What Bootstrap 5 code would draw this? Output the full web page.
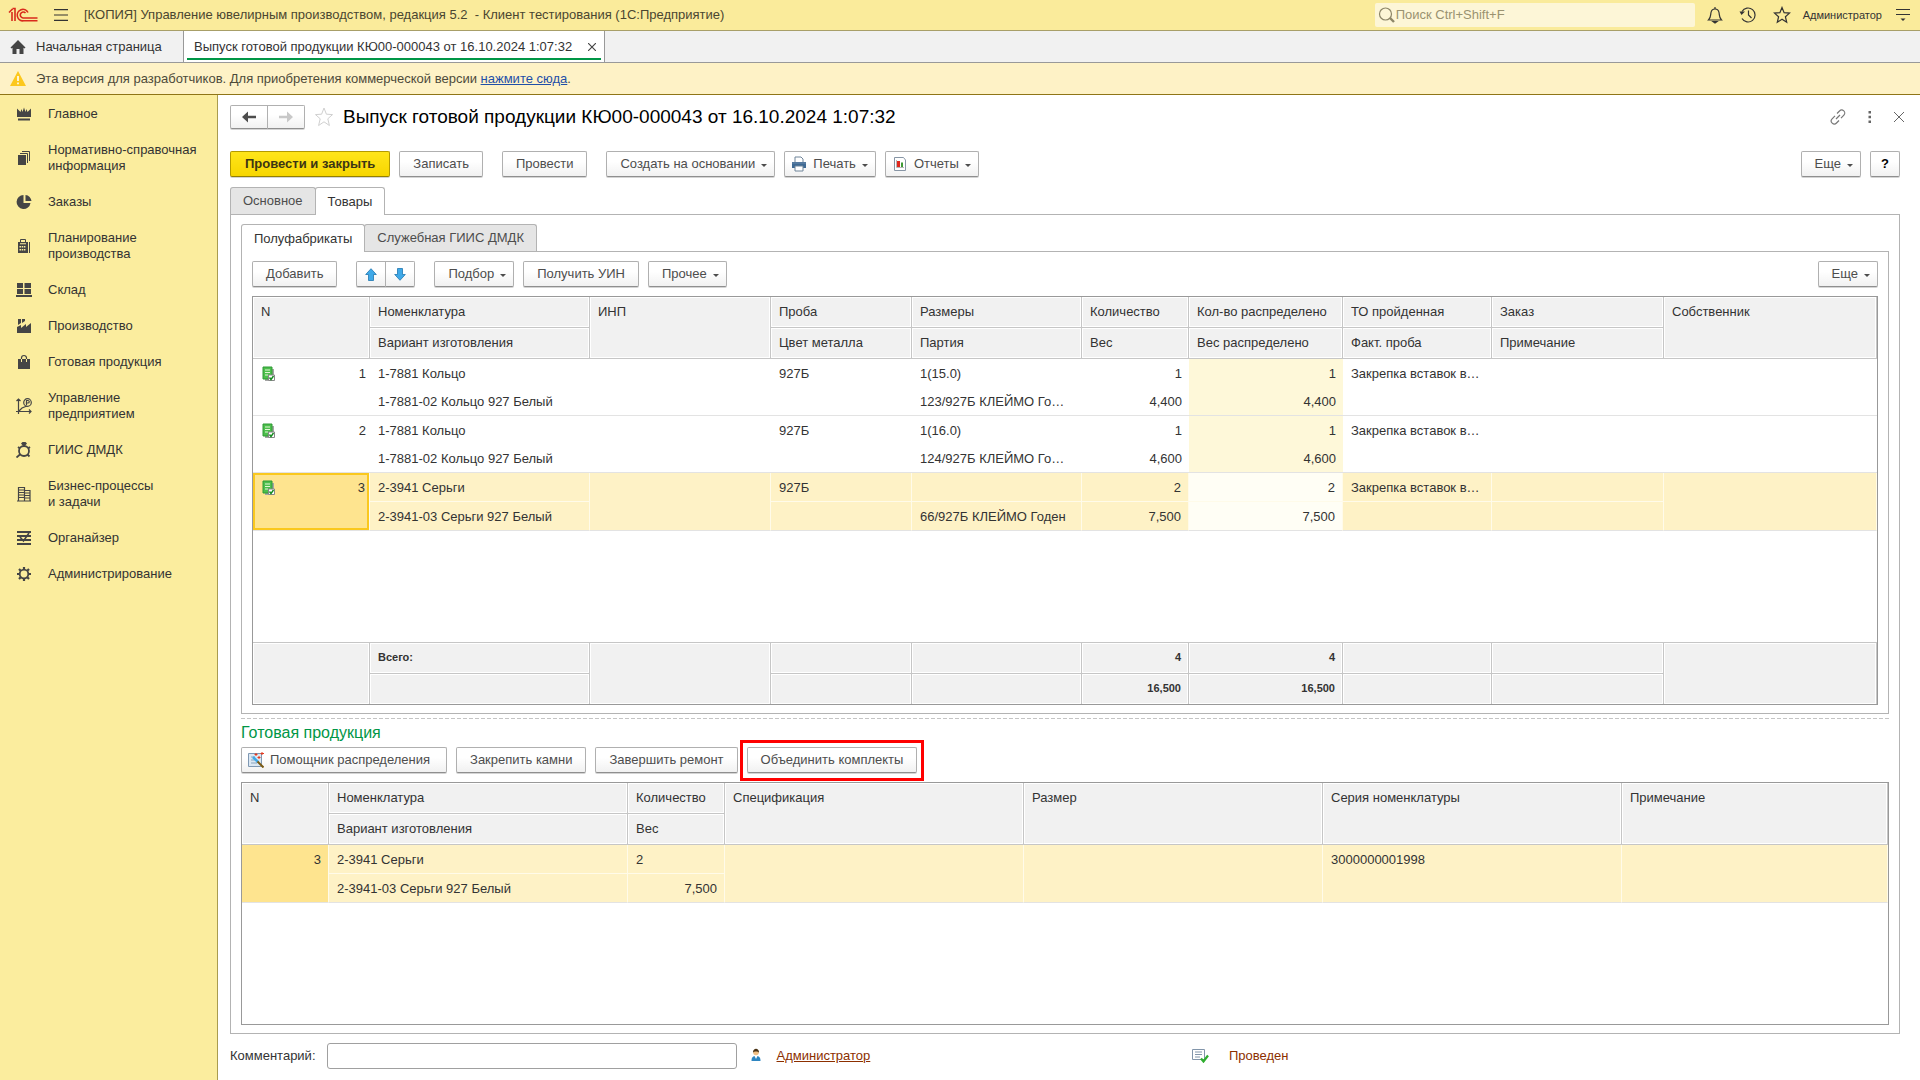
<!DOCTYPE html>
<html lang="ru">
<head>
<meta charset="utf-8">
<meta name="viewport" content="width=device-width, initial-scale=1">
<title>Выпуск готовой продукции КЮ00-000043</title>
<link href="https://cdn.jsdelivr.net/npm/bootstrap@5.3.0/dist/css/bootstrap.min.css" rel="stylesheet">
<style>
:root{--line:#b3b3b3;--ink:#333;--ink-soft:#4d4d4d}
body{font:13px/16px "Liberation Sans",Arial,sans-serif;color:var(--ink);background:#fff}
svg{display:block;flex:none}
/* window bar */
.app-bar{height:31px;background:#faeb9b;border-bottom:1px solid #a89f68;padding-left:8px;padding-right:10px}
.app-title{color:#4a4630;white-space:pre}
.icon-btn{background:none;border:0;padding:0;color:inherit;line-height:16px}
.search-box{width:320px;height:24px;background:#fdf6d7;border-radius:2px;padding:0 4px 0 3px;color:#9a9270}
.search-box input{border:0;background:none;outline:0;padding:0;font-size:13px;line-height:16px;color:#9a9270}
.search-box input::placeholder{color:#9a9270;opacity:1}
.user-name{font-size:11px;color:#333;margin-right:14px}
/* open windows */
.win-tabs{height:32px;background:#f1f1f1;border-bottom:1px solid #999}
.win-tab{color:var(--ink);text-decoration:none;padding:0 10px;gap:10px}
.win-tab.home-tab{width:183px}
.win-tab.current{background:#fff;border:solid #999;border-width:0 1px;gap:16px;padding-right:8px;box-shadow:inset 3px 0 #fff,inset -3px 0 #fff,inset 0 -2px #fff,inset 0 -4px #009646}
.notice{height:32px;background:#fef2c6;border-bottom:1px solid #8f7517;padding:0 10px;gap:10px;color:#4d4a3a}
.notice a{color:#1f4fa8}
/* sections */
.side{width:218px;flex:none;padding-top:1px;background:#fbed9e;border-right:1px solid #a99c4f}
.side a{color:var(--ink);text-decoration:none;padding:10px 0 10px 16px;gap:16px}
.side svg{color:#454545}
/* form */
.form-area{padding:10px 20px 11px 12px}
.title-row{margin:0 -4px 22px 0}
.title-tools{gap:22px}
.form-title{font-size:19px;line-height:24px;color:#000;font-weight:400}
.cmd-row{gap:9px}
.apart{margin-left:10px}
.below-10{margin-bottom:10px}
.below-9{margin-bottom:9px}
.cmd{height:26px;padding:0 13px;font-size:13px;line-height:16px;color:var(--ink-soft);white-space:nowrap;background:linear-gradient(#fff 40%,#f1f1f1);border:1px solid #b0b0b0;border-bottom-color:#8f8f8f;border-radius:2px;box-shadow:0 1px 0 #d4d4d4}
.cmd.main-cmd{padding:0 14px;color:#3c3514;font-weight:700;background:linear-gradient(#ffe51a,#f7d600);border-color:#b39a00;border-bottom-color:#948000}
.cmd.pic{padding-left:6px;padding-right:16px;gap:6px}
.cmd.drop{padding-right:7px}
.cmd.drop::after{content:"";margin-left:6px;margin-top:3px;border:solid transparent;border-width:3px 3px 0;border-top-color:#4d4d4d}
.cmd.pic.drop::after{margin-left:0}
.cmd:hover{border-color:#8f8f8f}
.cmd.seg{width:30px;padding:0}
.cmd.wide{width:38px;height:24px;padding:0}
.seg-a{border-radius:2px 0 0 2px}
.seg-b{border-radius:0 2px 2px 0;margin-left:-1px}
.page-tab{height:27px;padding:0 12px;border:1px solid var(--line);border-bottom:0;background:#e5e5e5;color:var(--ink-soft);font-size:13px;line-height:16px;border-radius:3px 3px 0 0}
.page-tab+.page-tab{margin-left:-1px}
.page-tab.active{background:#fff;color:var(--ink);height:28px;margin-bottom:-1px;position:relative}
.pane{border:1px solid var(--line);padding:9px 10px 8px}
/* tables */
.frame{border:1px solid #999}
.tgrid.table{table-layout:fixed;border-collapse:separate;border-spacing:0;margin:0;color:var(--ink);width:100%}
.tgrid.table th,.tgrid.table td{padding:0 7px 0 8px;font-weight:400;white-space:nowrap;overflow:hidden;border:0;background:none;box-shadow:none;color:var(--ink);line-height:16px}
.tgrid.table thead th,.tgrid.table tfoot td{height:31px;vertical-align:middle;background:#f1f1f1;border:solid #c6c6c6;border-width:0 1px 1px 0;box-shadow:inset 0 0 0 1px #fff}
.tgrid.table thead [rowspan]{vertical-align:top;padding-top:7px}
.tgrid.table tfoot td{font-size:11px;font-weight:700;padding-bottom:3px}
.tgrid.table tfoot tr:last-child td{height:30px;border-bottom:0}
.tgrid.table tfoot tr:first-child td{height:32px;border-top:1px solid #c6c6c6}
.tgrid.table tfoot [rowspan]{border-bottom:0}
.tgrid.table tbody td{height:28px;vertical-align:middle;padding-top:2px}
.tgrid.table tbody td[rowspan]{vertical-align:top;padding-top:7px}
.tgrid.table tbody tr.last td,.tgrid.table tbody td[rowspan]{height:29px;border-bottom:1px solid #e3e3e3}
.tgrid.table tbody tr.pick td{background:#fef2c6;height:29px;border-right:1px solid #fffbe9}
.tgrid.table tbody tr.pick:not(.last) td:not([rowspan]){border-bottom:1px solid #fffbe9}
.tgrid.table tbody td.spread{background:#fef8d9}
.tgrid.table tbody tr.pick td.spread{background:#fffef5}
.tgrid.table tbody tr.pick td.key{background:#fee48f}
.tgrid.table tbody tr.pick td.focused{box-shadow:inset 0 0 0 2px #fac81e}
.tgrid.table td.num{text-align:right}
.tgrid.table td.tight{padding-right:4px;padding-left:9px}
.tgrid.table tr.gap-row td{height:111px}
.group-title{font-size:16px;line-height:20px;color:#009646}
.splitter{height:1px;background:repeating-linear-gradient(90deg,#c4c4c4 0 4px,transparent 4px 6px)}
.marked{position:relative}
.marked::after{content:"";position:absolute;inset:-8px -8px -9px -8px;border:3px solid #f00;pointer-events:none}
.foot-row{margin-top:9px}
.foot-main{width:57.6%;gap:12px}
.foot-main label{margin-right:-1px}
.brown{color:#8c2f00}
.note-input{width:410px;height:26px;border:1px solid #a0a0a0;border-radius:3px;padding:0 6px}
.status{gap:20px}
</style>
</head>
<body class="d-flex flex-column min-vh-100">

<header class="app-bar d-flex align-items-center">
  <svg width="30" height="16" viewBox="0 0 30 16" fill="none" stroke="#d92b1c" stroke-width="1.6"><path d="M1 5.500 4.500 2M4 5v9M7 14V1.500H4.500"/><path d="M20 5.500A5.700 5.700 0 1 0 15.500 13.800H29.500"/><path d="M17.500 6A3 3 0 1 0 15 11H29.500"/></svg>
  <button class="icon-btn ms-3" aria-label="Меню"><svg width="14" height="12" viewBox="0 0 14 12" stroke="#333" stroke-width="1.200"><path d="M0 .6h14M0 6h14M0 11.400h14"/></svg></button>
  <div class="app-title ms-3 flex-grow-1">[КОПИЯ] Управление ювелирным производством, редакция 5.2  - Клиент тестирования (1С:Предприятие)</div>
  <label class="search-box d-flex align-items-center"><svg width="18" height="18" viewBox="0 0 18 18" fill="none" stroke="#8d8668" stroke-width="1.200"><circle cx="7.500" cy="8" r="6"/><path d="m12 12 4 4" stroke-width="2.400"/></svg><input class="flex-grow-1" type="search" placeholder="Поиск Ctrl+Shift+F" aria-label="Поиск"></label>
  <div class="d-flex align-items-center ms-2 ps-1">
    <button class="icon-btn" aria-label="Оповещения"><svg width="16" height="18" viewBox="0 0 16 18" fill="none" stroke="#333" stroke-width="1.200"><path d="M1.500 14c2.500-2.500 2-5 2.500-7.500C4.400 4.200 6 3 8 3s3.600 1.200 4 3.500c.5 2.500 0 5 2.500 7.500z"/><path d="M8 1v2"/><path d="M6 15.500h4l-2 1.500z" fill="#333"/></svg></button>
    <button class="icon-btn ms-3" aria-label="История"><svg width="18" height="18" viewBox="0 0 18 18" fill="none" stroke="#333" stroke-width="1.200"><path d="M3 5.500A7 7 0 1 1 3 12.500"/><path d="M9.500 4.500V9l3 3"/><path d="M.5 5.500h5.500L2.500 9z" fill="#333" stroke="none"/></svg></button>
    <button class="icon-btn ms-3" aria-label="Избранное"><svg width="18" height="18" viewBox="0 0 18 18" fill="none" stroke="#333" stroke-width="1.200"><path d="m9 1.500 2.100 5.200 5.400.4-4.100 3.600 1.300 5.600L9 13.300l-4.700 3 1.300-5.600-4.100-3.600 5.400-.4z"/></svg></button>
  </div>
  <button class="icon-btn user-name ms-2 ps-1">Администратор</button>
  <button class="icon-btn" aria-label="Настройки"><svg width="14" height="14" viewBox="0 0 14 14" stroke="#333" stroke-width="1.200"><path d="M0 1.500h14M0 6.500h14"/><path d="M4.500 10.500h5L7 13z" fill="#333" stroke="none"/></svg></button>
</header>

<nav class="win-tabs d-flex">
  <a class="win-tab home-tab d-flex align-items-center" href="#"><svg width="16" height="14" viewBox="0 0 15 14" fill="#454545"><path d="M0 7.500 7.500 0 15 7.500l-1 1-1-.8V14H9V9H6v5H2V7.700l-1 .8z"/></svg><span class="text-nowrap">Начальная страница</span></a>
  <a class="win-tab current d-flex align-items-center text-nowrap" href="#">Выпуск готовой продукции КЮ00-000043 от 16.10.2024 1:07:32<svg width="8" height="8" viewBox="0 0 7 7" stroke="#444"><path d="m0 0 7 7M7 0 0 7"/></svg></a>
</nav>

<div class="notice d-flex align-items-center">
  <svg width="16" height="15" viewBox="0 0 16 15"><path d="M8 0 16 15H0z" fill="#fcc81e"/><path d="M8 5v5M8 11.500v1.800" stroke="#fff" stroke-width="1.600"/></svg>
  <span>Эта версия для разработчиков. Для приобретения коммерческой версии <a href="#">нажмите сюда</a>.</span>
</div>

<div class="d-flex flex-grow-1">
  <nav class="side d-flex flex-column">
    <a class="d-flex align-items-center" href="#"><svg width="16" height="16" viewBox="0 0 16 16" fill="currentColor"><path d="M1 2.500 4.500 6 5.500 3 6.500 6 8 1.500 9.500 6l1-3 1 3L15 2.500V11H1zM2 12.500h12V14.500H2z"/></svg>Главное</a>
    <a class="d-flex align-items-center" href="#"><svg width="16" height="16" viewBox="0 0 16 16" fill="none" stroke="currentColor"><path d="M2 5h8v10H2z" fill="currentColor" stroke="none"/><path d="M4 3.500h7.500V13M6 1.500h7.500V11"/></svg><span>Нормативно-справочная<br>информация</span></a>
    <a class="d-flex align-items-center" href="#"><svg width="16" height="16" viewBox="0 0 16 16" fill="currentColor"><path d="M7.500 1a7 7 0 1 0 7 8h-7z"/><path d="M9.500 1v6h6a6.500 6.500 0 0 0-6-6z"/></svg>Заказы</a>
    <a class="d-flex align-items-center" href="#"><svg width="16" height="16" viewBox="0 0 16 16" fill="none" stroke="currentColor"><path d="M4.500 5V1.500h5V5M13.500 4v11"/><path fill="currentColor" stroke="none" fill-rule="evenodd" d="M2 4h10v11H2zm1.500 4v1.500H5V8zm2.200 0v1.500h1.500V8zm2.200 0v1.500h1.500V8zM3.500 11v1.500H5V11zm2.200 0v1.500h1.500V11zm2.200 0v1.500h1.500V11zM4 5.200v1h6v-1z"/></svg><span>Планирование<br>производства</span></a>
    <a class="d-flex align-items-center" href="#"><svg width="16" height="16" viewBox="0 0 16 16" fill="currentColor"><path d="M1 1h6v5H1zM8.500 1H15v5H8.500zM1 7h6v5H1zM8.500 7H15v5H8.500zM0 13h16v2H0z"/></svg>Склад</a>
    <a class="d-flex align-items-center" href="#"><svg width="16" height="16" viewBox="0 0 16 16" fill="currentColor"><path d="M1 15V9l4-2v3l5-4v3l5-4v10zM2 1h3v4L2 7zM6 1h3v2L6 5z"/></svg>Производство</a>
    <a class="d-flex align-items-center" href="#"><svg width="16" height="16" viewBox="0 0 16 16"><path d="M2 5h12v10H2z" fill="currentColor"/><path d="M5.500 5V4a2.500 2.500 0 0 1 5 0v1" fill="none" stroke="currentColor" stroke-width="1.200"/><path d="M5.500 5v3M10.500 5v3" stroke="#fbed9e"/></svg>Готовая продукция</a>
    <a class="d-flex align-items-center" href="#"><svg width="16" height="16" viewBox="0 0 16 16" fill="none" stroke="currentColor" stroke-width="1.200"><path d="M2.500 16V1M.5 3l2-2 2 2M0 13.500h15M13 11.500l2 2-2 2M3 13l3-3 5-2"/><circle cx="11.500" cy="4.500" r="3.800"/><path d="M10.500 7V2.500h1.500a1.200 1.200 0 0 1 0 2.500H9.800"/></svg><span>Управление<br>предприятием</span></a>
    <a class="d-flex align-items-center" href="#"><svg width="16" height="16" viewBox="0 0 16 16" fill="none" stroke="currentColor" stroke-width="1.800"><circle cx="8" cy="9" r="5"/><path d="m4.500 12-4 3.500M11.500 12.500l2 2M2 5l2 1.500M14 5l-2 1.500"/><path d="M5 1.500 6.500 0h3L11 1.500 8 5z" fill="currentColor" stroke="none"/></svg>ГИИС ДМДК</a>
    <a class="d-flex align-items-center" href="#"><svg width="16" height="16" viewBox="0 0 16 16" fill="none" stroke="currentColor" stroke-width="1.200"><path d="M2.500 15V1.500h6V15M8.500 4.500H14V15M1 15h14M2.500 4h6M2.500 6.500h6M2.500 9h6M2.500 11.500h6M8.500 7H14M8.500 9.500H14M8.500 12H14"/></svg><span>Бизнес-процессы<br>и задачи</span></a>
    <a class="d-flex align-items-center" href="#"><svg width="16" height="16" viewBox="0 0 16 16" fill="none" stroke="currentColor" stroke-width="1.800"><path d="M1 2h14M1 6h14M1 10h14M1 14h14"/><path d="m4 7 3.500 4L13 3" stroke-width="1.600"/></svg>Органайзер</a>
    <a class="d-flex align-items-center" href="#"><svg width="16" height="16" viewBox="0 0 16 16" fill="none" stroke="currentColor"><circle cx="8" cy="8" r="4.300" stroke-width="1.800"/><path stroke-width="2.200" d="M8 1v2.500M8 12.500V15M1 8h2.500M12.500 8H15M3 3l1.700 1.700M11.300 11.300 13 13M3 13l1.700-1.700M11.300 4.700 13 3"/></svg>Администрирование</a>
  </nav>

  <main class="form-area flex-grow-1 d-flex flex-column overflow-hidden">
    <div class="title-row d-flex align-items-center">
      <div class="d-flex">
        <button class="cmd seg-a wide d-flex align-items-center justify-content-center" aria-label="Назад"><svg width="14" height="12" viewBox="0 0 14 12"><path d="M0 6 6 .5V4.800h8v2.400H6v4.300z" fill="#4d4d4d"/></svg></button>
        <button class="cmd seg-b wide d-flex align-items-center justify-content-center" aria-label="Вперед"><svg width="14" height="12" viewBox="0 0 14 12"><path d="M14 6 8 .5V4.800H0v2.400h8v4.300z" fill="#c8c8c8"/></svg></button>
      </div>
      <button class="icon-btn ms-2" aria-label="В избранное"><svg width="22" height="20" viewBox="0 0 22 20" fill="none" stroke="#d0d0d0"><path d="m11 1 2.400 6.200 6.100.4-4.700 4.200 1.600 6.700-5.400-3.700-5.400 3.700 1.600-6.700L2.500 7.600l6.100-.4z"/></svg></button>
      <h1 class="form-title mb-0 ms-2 flex-grow-1">Выпуск готовой продукции КЮ00-000043 от 16.10.2024 1:07:32</h1>
      <div class="title-tools d-flex align-items-center">
        <button class="icon-btn" aria-label="Ссылка"><svg width="16" height="16" viewBox="0 0 16 16" fill="none" stroke="#777" stroke-width="1.200"><path d="M7 4.500 9.500 2a3 3 0 0 1 4.400 4.200L11 9.200M9 11.500 6.500 14a3 3 0 0 1-4.400-4.200L5 6.800M6 10l4-4"/></svg></button>
        <button class="icon-btn" aria-label="Еще действия"><svg width="4" height="12" viewBox="0 0 4 12" fill="#666"><path d="M.5 0h2.500v2.500H.5zM.5 4.700h2.500v2.500H.5zM.5 9.400h2.500v2.500H.5z"/></svg></button>
        <button class="icon-btn" aria-label="Закрыть"><svg width="10" height="10" viewBox="0 0 10 10" stroke="#666"><path d="m0 0 10 10M10 0 0 10"/></svg></button>
      </div>
    </div>

    <div class="cmd-row d-flex below-10">
      <button class="cmd main-cmd">Провести и закрыть</button>
      <button class="cmd">Записать</button>
      <button class="cmd apart">Провести</button>
      <button class="cmd drop d-flex align-items-center apart">Создать на основании</button>
      <button class="cmd pic drop d-flex align-items-center"><svg width="16" height="16" viewBox="0 0 16 16"><path d="M4 6V1h6l2 2v3" fill="#fff" stroke="#6f8499"/><path d="M1 6h14v6H1z" fill="#3f6a94"/><path d="M1 6h14v2H1z" fill="#54799f"/><path d="M4 10h8v5H4z" fill="#fff" stroke="#6f8499"/></svg>Печать</button>
      <button class="cmd pic drop d-flex align-items-center"><svg width="16" height="16" viewBox="0 0 16 16"><path d="M2.500 1.500h9l2 2.500v10.500h-11z" fill="#fff" stroke="#8795a5"/><path d="M4.500 4v7.500H12" fill="none" stroke="#b7b7b7"/><path d="M5 5h3v6H5z" fill="#e0281e"/><path d="M9 6.500h2V11H9z" fill="#3e9a35"/></svg>Отчеты</button>
      <button class="cmd drop d-flex align-items-center ms-auto">Еще</button>
      <button class="cmd seg fw-bold text-black">?</button>
    </div>

    <div class="d-flex align-items-end" role="tablist">
      <button class="page-tab" role="tab">Основное</button>
      <button class="page-tab active" role="tab" aria-selected="true">Товары</button>
    </div>
    <div class="pane flex-grow-1 d-flex flex-column">
      <div class="d-flex align-items-end" role="tablist">
        <button class="page-tab active" role="tab" aria-selected="true">Полуфабрикаты</button>
        <button class="page-tab" role="tab">Служебная ГИИС ДМДК</button>
      </div>
      <div class="pane">
        <div class="cmd-row d-flex below-9">
          <button class="cmd">Добавить</button>
          <div class="d-flex apart">
            <button class="cmd seg seg-a d-flex align-items-center justify-content-center" aria-label="Вверх"><svg width="12" height="13" viewBox="0 0 12 13"><path d="M6 .7 11.300 6.500H8.500v6h-5v-6H.7z" fill="#3fa9e8" stroke="#1f76b0" stroke-width=".8"/></svg></button>
            <button class="cmd seg seg-b d-flex align-items-center justify-content-center" aria-label="Вниз"><svg width="12" height="13" viewBox="0 0 12 13"><path d="M6 12.300.7 6.500h2.800v-6h5v6h2.800z" fill="#3fa9e8" stroke="#1f76b0" stroke-width=".8"/></svg></button>
          </div>
          <button class="cmd drop d-flex align-items-center apart">Подбор</button>
          <button class="cmd">Получить УИН</button>
          <button class="cmd drop d-flex align-items-center">Прочее</button>
          <button class="cmd drop d-flex align-items-center ms-auto">Еще</button>
        </div>
        <div class="frame">
          <table class="table tgrid">
            <colgroup><col style="width:117px"><col style="width:220px"><col style="width:181px"><col style="width:141px"><col style="width:170px"><col style="width:107px"><col style="width:154px"><col style="width:149px"><col style="width:172px"><col></colgroup>
            <thead>
              <tr><th rowspan="2">N</th><th>Номенклатура</th><th rowspan="2">ИНП</th><th>Проба</th><th>Размеры</th><th>Количество</th><th>Кол-во распределено</th><th>ТО пройденная</th><th>Заказ</th><th rowspan="2">Собственник</th></tr>
              <tr><th>Вариант изготовления</th><th>Цвет металла</th><th>Партия</th><th>Вес</th><th>Вес распределено</th><th>Факт. проба</th><th>Примечание</th></tr>
            </thead>
            <tbody>
              <tr><td rowspan="2" class="key tight"><div class="d-flex justify-content-between"><svg width="14" height="16" viewBox="0 0 14 16"><path d="M3 3h9v12H3z" fill="#a5a5a5"/><path d="M1 1h9v12H1z" fill="#4cbf4c" stroke="#2e9a35"/><path d="M3 4h5M3 6.500h5M3 9h3" stroke="#e2f7d5"/><path d="M6.500 9h6v5.500h-6z" fill="#fff" stroke="#888"/><path d="m7.500 11.500 1.500 2 2.500-3.500" fill="none" stroke="#118a1c" stroke-width="1.400"/></svg>1</div></td><td>1-7881 Кольцо</td><td rowspan="2"></td><td>927Б</td><td>1(15.0)</td><td class="num">1</td><td class="num spread">1</td><td>Закрепка вставок в…</td><td></td><td rowspan="2"></td></tr>
              <tr class="last"><td>1-7881-02 Кольцо 927 Белый</td><td></td><td>123/927Б КЛЕЙМО Го…</td><td class="num">4,400</td><td class="num spread">4,400</td><td></td><td></td></tr>
              <tr><td rowspan="2" class="key tight"><div class="d-flex justify-content-between"><svg width="14" height="16" viewBox="0 0 14 16"><path d="M3 3h9v12H3z" fill="#a5a5a5"/><path d="M1 1h9v12H1z" fill="#4cbf4c" stroke="#2e9a35"/><path d="M3 4h5M3 6.500h5M3 9h3" stroke="#e2f7d5"/><path d="M6.500 9h6v5.500h-6z" fill="#fff" stroke="#888"/><path d="m7.500 11.500 1.500 2 2.500-3.500" fill="none" stroke="#118a1c" stroke-width="1.400"/></svg>2</div></td><td>1-7881 Кольцо</td><td rowspan="2"></td><td>927Б</td><td>1(16.0)</td><td class="num">1</td><td class="num spread">1</td><td>Закрепка вставок в…</td><td></td><td rowspan="2"></td></tr>
              <tr class="last"><td>1-7881-02 Кольцо 927 Белый</td><td></td><td>124/927Б КЛЕЙМО Го…</td><td class="num">4,600</td><td class="num spread">4,600</td><td></td><td></td></tr>
              <tr class="pick"><td rowspan="2" class="key tight focused"><div class="d-flex justify-content-between"><svg width="14" height="16" viewBox="0 0 14 16"><path d="M3 3h9v12H3z" fill="#a5a5a5"/><path d="M1 1h9v12H1z" fill="#4cbf4c" stroke="#2e9a35"/><path d="M3 4h5M3 6.500h5M3 9h3" stroke="#e2f7d5"/><path d="M6.500 9h6v5.500h-6z" fill="#fff" stroke="#888"/><path d="m7.500 11.500 1.500 2 2.500-3.500" fill="none" stroke="#118a1c" stroke-width="1.400"/></svg>3</div></td><td>2-3941 Серьги</td><td rowspan="2"></td><td>927Б</td><td></td><td class="num">2</td><td class="num spread">2</td><td>Закрепка вставок в…</td><td></td><td rowspan="2"></td></tr>
              <tr class="last pick"><td>2-3941-03 Серьги 927 Белый</td><td></td><td>66/927Б КЛЕЙМО Годен</td><td class="num">7,500</td><td class="num spread">7,500</td><td></td><td></td></tr>
              <tr class="gap-row"><td colspan="10"></td></tr>
            </tbody>
            <tfoot>
              <tr><td rowspan="2"></td><td>Всего:</td><td rowspan="2"></td><td></td><td></td><td class="num">4</td><td class="num">4</td><td></td><td></td><td rowspan="2"></td></tr>
              <tr><td></td><td></td><td></td><td class="num">16,500</td><td class="num">16,500</td><td></td><td></td></tr>
            </tfoot>
          </table>
        </div>
      </div>
      <div class="splitter mt-1"></div>
      <h2 class="group-title my-1">Готовая продукция</h2>
      <div class="cmd-row d-flex below-9">
        <button class="cmd pic d-flex align-items-center"><svg width="16" height="16" viewBox="0 0 16 16"><path d="M.5 1.500h13v13H.5z" fill="#dce8f3" stroke="#7f98b3"/><path d="M3 5h4M3 8h4M3 11h6" stroke="#8aa5bf"/><path d="m5 5 5 5" stroke="#3fa9e8" stroke-width="2.600"/><path d="m9.500 9.500 6 6" stroke="#7a5a14" stroke-width="2"/><path d="M8 1v3M6.500 2.500h3M11 4v3M9.500 5.500h3M14 0v3M12.500 1.500H16" stroke="#e5391e"/></svg>Помощник распределения</button>
        <button class="cmd">Закрепить камни</button>
        <button class="cmd">Завершить ремонт</button>
        <button class="cmd marked">Объединить комплекты</button>
      </div>
      <div class="frame flex-grow-1">
        <table class="table tgrid">
          <colgroup><col style="width:87px"><col style="width:299px"><col style="width:97px"><col style="width:299px"><col style="width:299px"><col style="width:299px"><col></colgroup>
          <thead>
            <tr><th rowspan="2">N</th><th>Номенклатура</th><th>Количество</th><th rowspan="2">Спецификация</th><th rowspan="2">Размер</th><th rowspan="2">Серия номенклатуры</th><th rowspan="2">Примечание</th></tr>
            <tr><th>Вариант изготовления</th><th>Вес</th></tr>
          </thead>
          <tbody>
            <tr class="pick"><td rowspan="2" class="num key">3</td><td>2-3941 Серьги</td><td>2</td><td rowspan="2"></td><td rowspan="2"></td><td rowspan="2">3000000001998</td><td rowspan="2"></td></tr>
            <tr class="last pick"><td>2-3941-03 Серьги 927 Белый</td><td class="num">7,500</td></tr>
          </tbody>
        </table>
      </div>
    </div>

    <div class="foot-row d-flex align-items-center">
      <div class="foot-main d-flex align-items-center">
        <label for="note">Комментарий:</label>
        <input id="note" class="note-input" type="text">
        <svg width="16" height="16" viewBox="0 0 16 16"><path d="M2.500 13c0-3.500 1-5 4.500-5s4.500 1.500 4.500 5z" fill="#2e86c1"/><path d="m5.500 8 1.500 3 1.500-3z" fill="#fff"/><circle cx="7" cy="4.500" r="2.800" fill="#f2c083"/><path d="M4 4.500c0-5 6-5 6 0-1-1.500-5-1.500-6 0z" fill="#4a3214"/></svg>
        <a class="brown" href="#">Администратор</a>
      </div>
      <div class="status d-flex align-items-center"><svg width="17" height="14" viewBox="0 0 17 14"><path d="M.5.500h12v10H.5z" fill="#fff" stroke="#8295aa"/><path d="M3 3h7M3 5.500h7M3 8h5" stroke="#8295aa"/><path d="m9 9.500 2.500 3L16 6.500" fill="none" stroke="#2fae2f" stroke-width="2.200"/></svg><span class="brown">Проведен</span></div>
    </div>
  </main>
</div>
<script src="https://cdn.jsdelivr.net/npm/bootstrap@5.3.0/dist/js/bootstrap.bundle.min.js"></script>
</body>
</html>
